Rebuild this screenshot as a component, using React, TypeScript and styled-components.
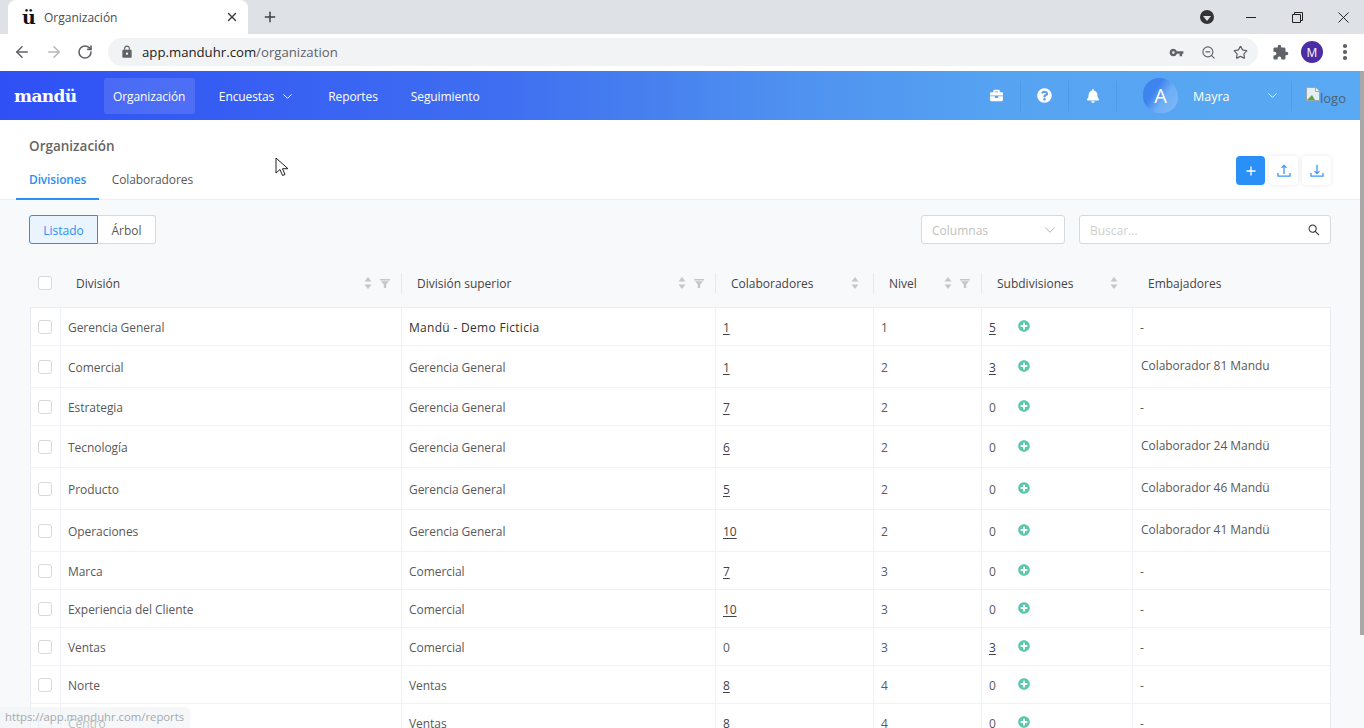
import React from 'react';
import styled, { createGlobalStyle } from 'styled-components';
import { FaBriefcase, FaQuestionCircle, FaBell, FaPlusCircle } from 'react-icons/fa';
import { MdLock, MdVpnKey, MdExtension } from 'react-icons/md';
import { AiOutlineSearch } from 'react-icons/ai';
import { ArrowLeft, ArrowRight, RotateCw, ZoomOut, Star, ChevronDown, X, Plus } from 'lucide-react';

const Global = createGlobalStyle`
  html, body { margin: 0; padding: 0; height: 100%; overflow: hidden; background: #fff; }
  body { font-family: "Open Sans", "Noto Sans", sans-serif; }
  * { box-sizing: border-box; }
`;

const Frame = styled.div`
  position: relative; width: 1364px; height: 728px; overflow: hidden; display: flex; flex-direction: column;
`;
const TabStrip = styled.div`
  height: 34px; flex: none; background: #dee1e6; display: flex; align-items: flex-end; padding-left: 8px;
`;
const BrowserTab = styled.div`
  width: 240px; height: 34px; background: #fff; border-radius: 8px 8px 0 0; display: flex; align-items: center; padding: 0 9px 0 14px; color: #3c4043;
`;
const Favicon = styled.span`
  font: 700 19px/1 "DejaVu Serif", serif; color: #111; width: 22px;
`;
const TabTitle = styled.span`
  flex: 1; font-size: 12px; color: #4a4d50;
`;
const NewTab = styled.div`
  margin-left: 14px; display: flex; color: #3c4043; align-self: center;
`;
const WindowControls = styled.div`
  margin-left: auto; display: flex; align-items: center; height: 34px; color: #222;
`;
const MediaBadge = styled.div`
  width: 14px; height: 14px; border-radius: 50%; background: #333; display: flex; align-items: center; justify-content: center; margin-right: 30px;
  &::after { content: ''; border: 4px solid transparent; border-top: 5px solid #dee1e6; border-bottom: 0; margin-top: 2px; }
`;
const WinBtn = styled.div<{ $w: number }>`
  width: ${p => p.$w}px; display: flex; justify-content: center;
`;
const Toolbar = styled.div`
  height: 37px; flex: none; background: #fff; display: flex; align-items: center; padding: 0 0 1px 13px; color: #5f6368;
`;
const NavBtn = styled.div<{ $muted?: boolean }>`
  width: 32px; display: flex; color: ${p => (p.$muted ? '#b4b7ba' : '#5f6368')};
`;
const Omnibox = styled.div`
  width: 1150px; height: 28px; margin-left: -1px; background: #f1f3f4; border-radius: 14px; display: flex; align-items: center; padding: 0 2px 0 12px;
`;
const Url = styled.div`
  margin-left: 8px; font-size: 13.2px; color: #222; flex: 1;
  span { color: #5f6368; }
`;
const OmniIcon = styled.div`
  width: 32px; display: flex; justify-content: center; color: #5f6368;
`;
const ExtensionIcon = styled(OmniIcon)`
  margin-left: 6px;
`;
const Profile = styled.div`
  width: 22px; height: 22px; border-radius: 50%; background: #4a2ea6; color: #fff; font-size: 12px; display: flex; align-items: center; justify-content: center; margin-left: 5px;
`;
const Dots = styled.div`
  margin-left: 20px; display: flex; flex-direction: column; gap: 2.5px;
  i { width: 3.5px; height: 3.5px; border-radius: 50%; background: #5f6368; display: block; }
`;
const NavBar = styled.div`
  height: 49px; flex: none; display: flex; align-items: center; color: #fff; padding-left: 14px;
  background: linear-gradient(90deg, #2f50f5 0, #3f6ef1 500px, #4a86ef 700px, #4f92f0 800px, #56a3f2 1000px, #59a9f3 1364px);
`;
const Logo = styled.div`
  font: 700 17px/1 "DejaVu Serif", serif; width: 90px; letter-spacing: -0.6px; padding-top: 1px;
`;
const NavItem = styled.div<{ $active?: boolean }>`
  height: 36px; display: flex; align-items: center; gap: 6px; font-size: 12px; letter-spacing: -0.1px; padding: 1px ${p => (p.$active ? 9.6 : 9)}px 0 9px;
  border-radius: 3px; margin-right: 15px; background: ${p => (p.$active ? 'rgba(255,255,255,.12)' : 'transparent')};
`;
const NavRight = styled.div`
  margin-left: auto; display: flex; align-items: center; height: 100%; padding-right: 18px;
`;
const NavIcon = styled.div`
  width: 48px; height: 30px; display: flex; align-items: center; justify-content: center; border-right: 1px solid rgba(40,90,180,.14);
`;
const Avatar = styled.div`
  width: 35px; height: 35px; border-radius: 50% 58% 48% 52%; margin-left: 26px; font-size: 20px; display: flex; align-items: center; justify-content: center;
  background: linear-gradient(125deg, #3f83ee 0 34%, #6eaef5 60%, #7fb9f7 100%);
`;
const UserName = styled.div`
  margin-left: 15px; font-size: 12.5px; width: 72px; padding-top: 1px;
`;
const UserMenu = styled.div`
  width: 27px; height: 30px; display: flex; align-items: center; border-right: 1px solid rgba(40,90,180,.14); margin-right: 14px;
`;
const BrokenLogo = styled.div`
  display: flex; align-items: flex-start; font-size: 13px; color: #4d6276; height: 20px; margin-top: 2px;
  span { margin-top: 2px; }
`;
const Page = styled.div`
  flex: 1; display: flex; flex-direction: column; background: #f8f9fb; min-height: 0;
`;
const SubHeader = styled.div`
  height: 80px; flex: none; background: #fff; border-bottom: 1px solid #eef0f3; display: flex; padding: 0 33px 0 16px;
`;
const HeaderLeft = styled.div`
  display: flex; flex-direction: column;
`;
const PageTitle = styled.div`
  font-size: 13.5px; font-weight: 600; color: #666; margin: 17px 0 0 13px; line-height: 18px;
`;
const TabRow = styled.div`
  display: flex; margin-top: 7px;
`;
const PageTab = styled.div<{ $active?: boolean }>`
  height: 38px; padding: 8px 13px 0 ${p => (p.$active ? 13 : 12.5)}px; font-size: 12px; line-height: 20px;
  color: ${p => (p.$active ? '#2a8ff7' : '#595959')}; font-weight: ${p => (p.$active ? 600 : 400)};
  letter-spacing: ${p => (p.$active ? '-0.15px' : '-0.1px')};
  border-bottom: 2px solid ${p => (p.$active ? '#2a8ff7' : 'transparent')};
`;
const Actions = styled.div`
  margin-left: auto; display: flex; gap: 4px; padding-top: 36px;
`;
const ActionBtn = styled.div<{ $primary?: boolean }>`
  width: 29px; height: 29px; border-radius: 4px; display: flex; align-items: center; justify-content: center;
  background: ${p => (p.$primary ? '#2a8ff7' : '#fff')}; color: ${p => (p.$primary ? '#fff' : '#3a97f8')};
  box-shadow: ${p => (p.$primary ? 'none' : '0 0 4px rgba(0,0,0,.1)')};
`;
const Controls = styled.div`
  display: flex; align-items: center; padding: 15px 33px 0 29px; flex: none;
`;
const Segment = styled.div<{ $active?: boolean; $w: number }>`
  width: ${p => p.$w}px; height: 29px; font-size: 12px; padding-top: 1px; display: flex; align-items: center; justify-content: center;
  border: 1px solid ${p => (p.$active ? '#2a8ff7' : '#d9d9d9')};
  ${p => (p.$active ? 'border-radius: 3px 0 0 3px; background: #eaf4fe; color: #2a8ff7;' : 'border-left: 0; border-radius: 0 3px 3px 0; background: #fff; color: #595959;')}
`;
const ColumnSelect = styled.div`
  margin-left: auto; width: 144px; height: 29px; background: #fff; border: 1px solid #d9d9d9; border-radius: 3px; display: flex; align-items: center; justify-content: space-between; padding: 0 5px 0 10px; font-size: 12px; color: #bfbfbf;
  span { padding-top: 2px; }
`;
const SearchBox = styled.div`
  margin-left: 14px; width: 252px; height: 29px; background: #fff; border: 1px solid #d9d9d9; border-radius: 3px; display: flex; align-items: center; justify-content: space-between; padding: 1px 9px 0 10px; font-size: 12px; color: #d0d0d0;
  svg { color: #333; }
`;
const TableWrap = styled.div`
  margin: 17px 33px 0 30px; display: flex; flex-direction: column;
`;
const HeadRow = styled.div`
  display: grid; grid-template-columns: 31px 341px 314px 158px 108px 151px 198px; height: 46px; align-items: center; padding-bottom: 2px;
`;
const HeadCheck = styled.div`
  display: flex; padding-left: 8px;
`;
const HeadCell = styled.div<{ $sep?: boolean }>`
  height: 20px; display: flex; align-items: center; padding: 0 11px 0 15px; font-size: 12px; font-weight: 500; color: #444;
  border-right: 1px solid ${p => (p.$sep ? '#e8e8e8' : 'transparent')};
`;
const HeadTools = styled.div<{ $extra: boolean }>`
  margin-left: auto; display: flex; align-items: center; gap: 8px; color: #c6c6c6; padding-right: ${p => (p.$extra ? 3 : 0)}px;
`;
const Body = styled.div`
  background: #fff; border: 1px solid #e8edf3; border-bottom: 0;
`;
const Row = styled.div<{ $h: number }>`
  display: grid; grid-template-columns: 31px 341px 314px 158px 108px 151px 197px; height: ${p => p.$h}px; border-bottom: 1px solid #eef1f5; margin-left: -1px;
`;
const Cell = styled.div<{ $strong?: boolean; $raised?: boolean }>`
  display: flex; align-items: center; padding: ${p => (p.$raised ? '0 8px 3px 8px' : '2px 8px 0 7px')}; font-size: 12px; color: ${p => (p.$strong ? '#333' : '#595959')};
  font-weight: ${p => (p.$strong ? 500 : 400)}; letter-spacing: ${p => (p.$strong ? '0.3px' : '-0.05px')}; border-right: 1px solid #eef1f5; white-space: nowrap;
  &:last-child { border-right: 0; }
`;
const CheckCell = styled(Cell)`
  padding: 1px 0 0 8px;
`;
const Check = styled.div`
  width: 14px; height: 14px; border: 1px solid #d9d9d9; border-radius: 3px; background: #fff;
`;
const LinkNum = styled.span`
  text-decoration: underline; color: #444; min-width: 29px; text-underline-offset: 2px;
`;
const Num = styled.span`
  min-width: 29px;
`;
const AddIcon = styled.span`
  display: flex; color: #5cc8ab; margin-bottom: 3px;
`;
const ScrollThumb = styled.div`
  position: absolute; right: 0; top: 71px; width: 4px; height: 564px; background: #a8a8a8;
`;
const StatusBubble = styled.div`
  position: absolute; left: 0; bottom: 0; height: 21px; width: 190px; padding: 2px 0 0 5px; font-size: 11.3px; white-space: nowrap; color: #a4a9af; background: rgba(240,242,245,.65); border-top-right-radius: 5px;
`;
const Pointer = styled.svg`
  position: absolute; left: 275px; top: 157px;
`;

const SortIcon = () => (
  <svg width="8" height="12" viewBox="0 0 8 12" fill="currentColor"><path d="M4 0 7.5 4.5H.5zM4 12 .5 7.5h7z" /></svg>
);
const FilterIcon = () => (
  <svg width="10" height="9" viewBox="0 0 10 9" fill="currentColor"><path d="M0 0h10v1.6H0zM1 2.2h8L6.200 5.500V9H3.800V5.500z" /></svg>
);
const UploadIcon = () => (
  <svg width="14" height="14" viewBox="0 0 14 14" fill="none" stroke="currentColor" strokeWidth="1.3"><path d="M1 9v3.200h12V9M7 10V1.600M4.500 3.900 7 1.400l2.500 2.500" /></svg>
);
const DownloadIcon = () => (
  <svg width="14" height="14" viewBox="0 0 14 14" fill="none" stroke="currentColor" strokeWidth="1.3"><path d="M1 9v3.200h12V9M7 .8v8.600M4.500 7.100 7 9.600l2.500-2.500" /></svg>
);
const MinimizeIcon = () => (
  <svg width="10" height="10" viewBox="0 0 10 10" stroke="currentColor"><path d="M0 5.500h10" /></svg>
);
const RestoreIcon = () => (
  <svg width="11" height="11" viewBox="0 0 11 11" fill="none" stroke="currentColor"><path d="M.5 2.500h8v8h-8zM2.500 2.500v-2h8v8h-2" /></svg>
);
const CloseIcon = () => (
  <svg width="11" height="11" viewBox="0 0 11 11" stroke="currentColor"><path d="M.5.500l10 10M10.500.500l-10 10" /></svg>
);

type H = { label: string; sort?: boolean; filter?: boolean; sep?: boolean };
const heads: H[] = [
  { label: 'División', sort: true, filter: true, sep: true },
  { label: 'División superior', sort: true, filter: true, sep: true },
  { label: 'Colaboradores', sort: true, sep: true },
  { label: 'Nivel', sort: true, filter: true, sep: true },
  { label: 'Subdivisiones', sort: true },
  { label: 'Embajadores' },
];
type R = { name: string; parent: string; collab: string; link: boolean; level: number; subs: string; subLink?: boolean; amb: string; h: number; strong?: boolean };
const rows: R[] = [
  { name: 'Gerencia General', parent: 'Mandü - Demo Ficticia', strong: true, collab: '1', link: true, level: 1, subs: '5', subLink: true, amb: '-', h: 38 },
  { name: 'Comercial', parent: 'Gerencia General', collab: '1', link: true, level: 2, subs: '3', subLink: true, amb: 'Colaborador 81 Mandu', h: 42 },
  { name: 'Estrategia', parent: 'Gerencia General', collab: '7', link: true, level: 2, subs: '0', amb: '-', h: 38 },
  { name: 'Tecnología', parent: 'Gerencia General', collab: '6', link: true, level: 2, subs: '0', amb: 'Colaborador 24 Mandü', h: 42 },
  { name: 'Producto', parent: 'Gerencia General', collab: '5', link: true, level: 2, subs: '0', amb: 'Colaborador 46 Mandü', h: 42 },
  { name: 'Operaciones', parent: 'Gerencia General', collab: '10', link: true, level: 2, subs: '0', amb: 'Colaborador 41 Mandü', h: 42 },
  { name: 'Marca', parent: 'Comercial', collab: '7', link: true, level: 3, subs: '0', amb: '-', h: 38 },
  { name: 'Experiencia del Cliente', parent: 'Comercial', collab: '10', link: true, level: 3, subs: '0', amb: '-', h: 38 },
  { name: 'Ventas', parent: 'Comercial', collab: '0', link: false, level: 3, subs: '3', subLink: true, amb: '-', h: 38 },
  { name: 'Norte', parent: 'Ventas', collab: '8', link: true, level: 4, subs: '0', amb: '-', h: 38 },
  { name: 'Centro', parent: 'Ventas', collab: '8', link: true, level: 4, subs: '0', amb: '-', h: 38 },
];

export default function App() {
  return (
    <Frame>
      <Global />
      <TabStrip>
        <BrowserTab>
          <Favicon>ü</Favicon>
          <TabTitle>Organización</TabTitle>
          <X size={14} strokeWidth={2.4} />
        </BrowserTab>
        <NewTab><Plus size={16} strokeWidth={2.2} /></NewTab>
        <WindowControls>
          <MediaBadge />
          <WinBtn $w={14}><MinimizeIcon /></WinBtn>
          <WinBtn $w={78}><RestoreIcon /></WinBtn>
          <WinBtn $w={14}><CloseIcon /></WinBtn>
          <WinBtn $w={14} />
        </WindowControls>
      </TabStrip>
      <Toolbar>
        <NavBtn><ArrowLeft size={18} strokeWidth={2} /></NavBtn>
        <NavBtn $muted><ArrowRight size={18} strokeWidth={2} /></NavBtn>
        <NavBtn><RotateCw size={16} strokeWidth={2.4} /></NavBtn>
        <Omnibox>
          <MdLock size={14} />
          <Url>app.manduhr.com<span>/organization</span></Url>
          <OmniIcon><MdVpnKey size={15} /></OmniIcon>
          <OmniIcon><ZoomOut size={15} strokeWidth={1.8} /></OmniIcon>
          <OmniIcon><Star size={15} strokeWidth={2} /></OmniIcon>
        </Omnibox>
        <ExtensionIcon><MdExtension size={17} /></ExtensionIcon>
        <Profile>M</Profile>
        <Dots><i /><i /><i /></Dots>
      </Toolbar>
      <NavBar>
        <Logo>mandü</Logo>
        <NavItem $active>Organización</NavItem>
        <NavItem>Encuestas <ChevronDown size={15} strokeWidth={1.5} /></NavItem>
        <NavItem>Reportes</NavItem>
        <NavItem>Seguimiento</NavItem>
        <NavRight>
          <NavIcon><FaBriefcase size={13} /></NavIcon>
          <NavIcon><FaQuestionCircle size={15} /></NavIcon>
          <NavIcon><FaBell size={14} /></NavIcon>
          <Avatar>A</Avatar>
          <UserName>Mayra</UserName>
          <UserMenu><ChevronDown size={15} strokeWidth={1.5} /></UserMenu>
          <BrokenLogo>
            <svg width="14" height="14" viewBox="0 0 14 14"><path d="M.5.500h9l4 4v9H.5z" fill="#e6eef5" stroke="#9aa5ae" /><path d="M1 13 6 8l3 5z" fill="#5aa845" /><path d="M9.500.500v4h4" fill="#fff" stroke="#9aa5ae" /></svg>
            <span>logo</span>
          </BrokenLogo>
        </NavRight>
      </NavBar>
      <Page>
        <SubHeader>
          <HeaderLeft>
            <PageTitle>Organización</PageTitle>
            <TabRow>
              <PageTab $active>Divisiones</PageTab>
              <PageTab>Colaboradores</PageTab>
            </TabRow>
          </HeaderLeft>
          <Actions>
            <ActionBtn $primary><Plus size={14} strokeWidth={2.2} /></ActionBtn>
            <ActionBtn><UploadIcon /></ActionBtn>
            <ActionBtn><DownloadIcon /></ActionBtn>
          </Actions>
        </SubHeader>
        <Controls>
          <Segment $active $w={69}>Listado</Segment>
          <Segment $w={58}>Árbol</Segment>
          <ColumnSelect><span>Columnas</span> <ChevronDown size={18} strokeWidth={1} color="#999" /></ColumnSelect>
          <SearchBox>Buscar...<AiOutlineSearch size={14} /></SearchBox>
        </Controls>
        <TableWrap>
          <HeadRow>
            <HeadCheck><Check /></HeadCheck>
            {heads.map(h => (
              <HeadCell key={h.label} $sep={h.sep}>
                {h.label}
                {(h.sort || h.filter) && (
                  <HeadTools $extra={!h.filter}>
                    {h.sort && <SortIcon />}
                    {h.filter && <FilterIcon />}
                  </HeadTools>
                )}
              </HeadCell>
            ))}
          </HeadRow>
          <Body>
            {rows.map(r => (
              <Row key={r.name} $h={r.h}>
                <CheckCell><Check /></CheckCell>
                <Cell>{r.name}</Cell>
                <Cell $strong={r.strong}>{r.parent}</Cell>
                <Cell>{r.link ? <LinkNum>{r.collab}</LinkNum> : <Num>{r.collab}</Num>}</Cell>
                <Cell>{r.level}</Cell>
                <Cell>
                  {r.subLink ? <LinkNum>{r.subs}</LinkNum> : <Num>{r.subs}</Num>}
                  <AddIcon><FaPlusCircle size={12} /></AddIcon>
                </Cell>
                <Cell $raised={r.amb !== '-'}>{r.amb}</Cell>
              </Row>
            ))}
          </Body>
        </TableWrap>
      </Page>
      <ScrollThumb />
      <StatusBubble>https://app.manduhr.com/reports</StatusBubble>
      <Pointer width="14" height="20" viewBox="0 0 14 20"><path d="M1 1v15l4-3.500 2.500 6 2.500-1-2.500-5.800H13z" fill="#fff" stroke="#222" strokeWidth="1" /></Pointer>
    </Frame>
  );
}
